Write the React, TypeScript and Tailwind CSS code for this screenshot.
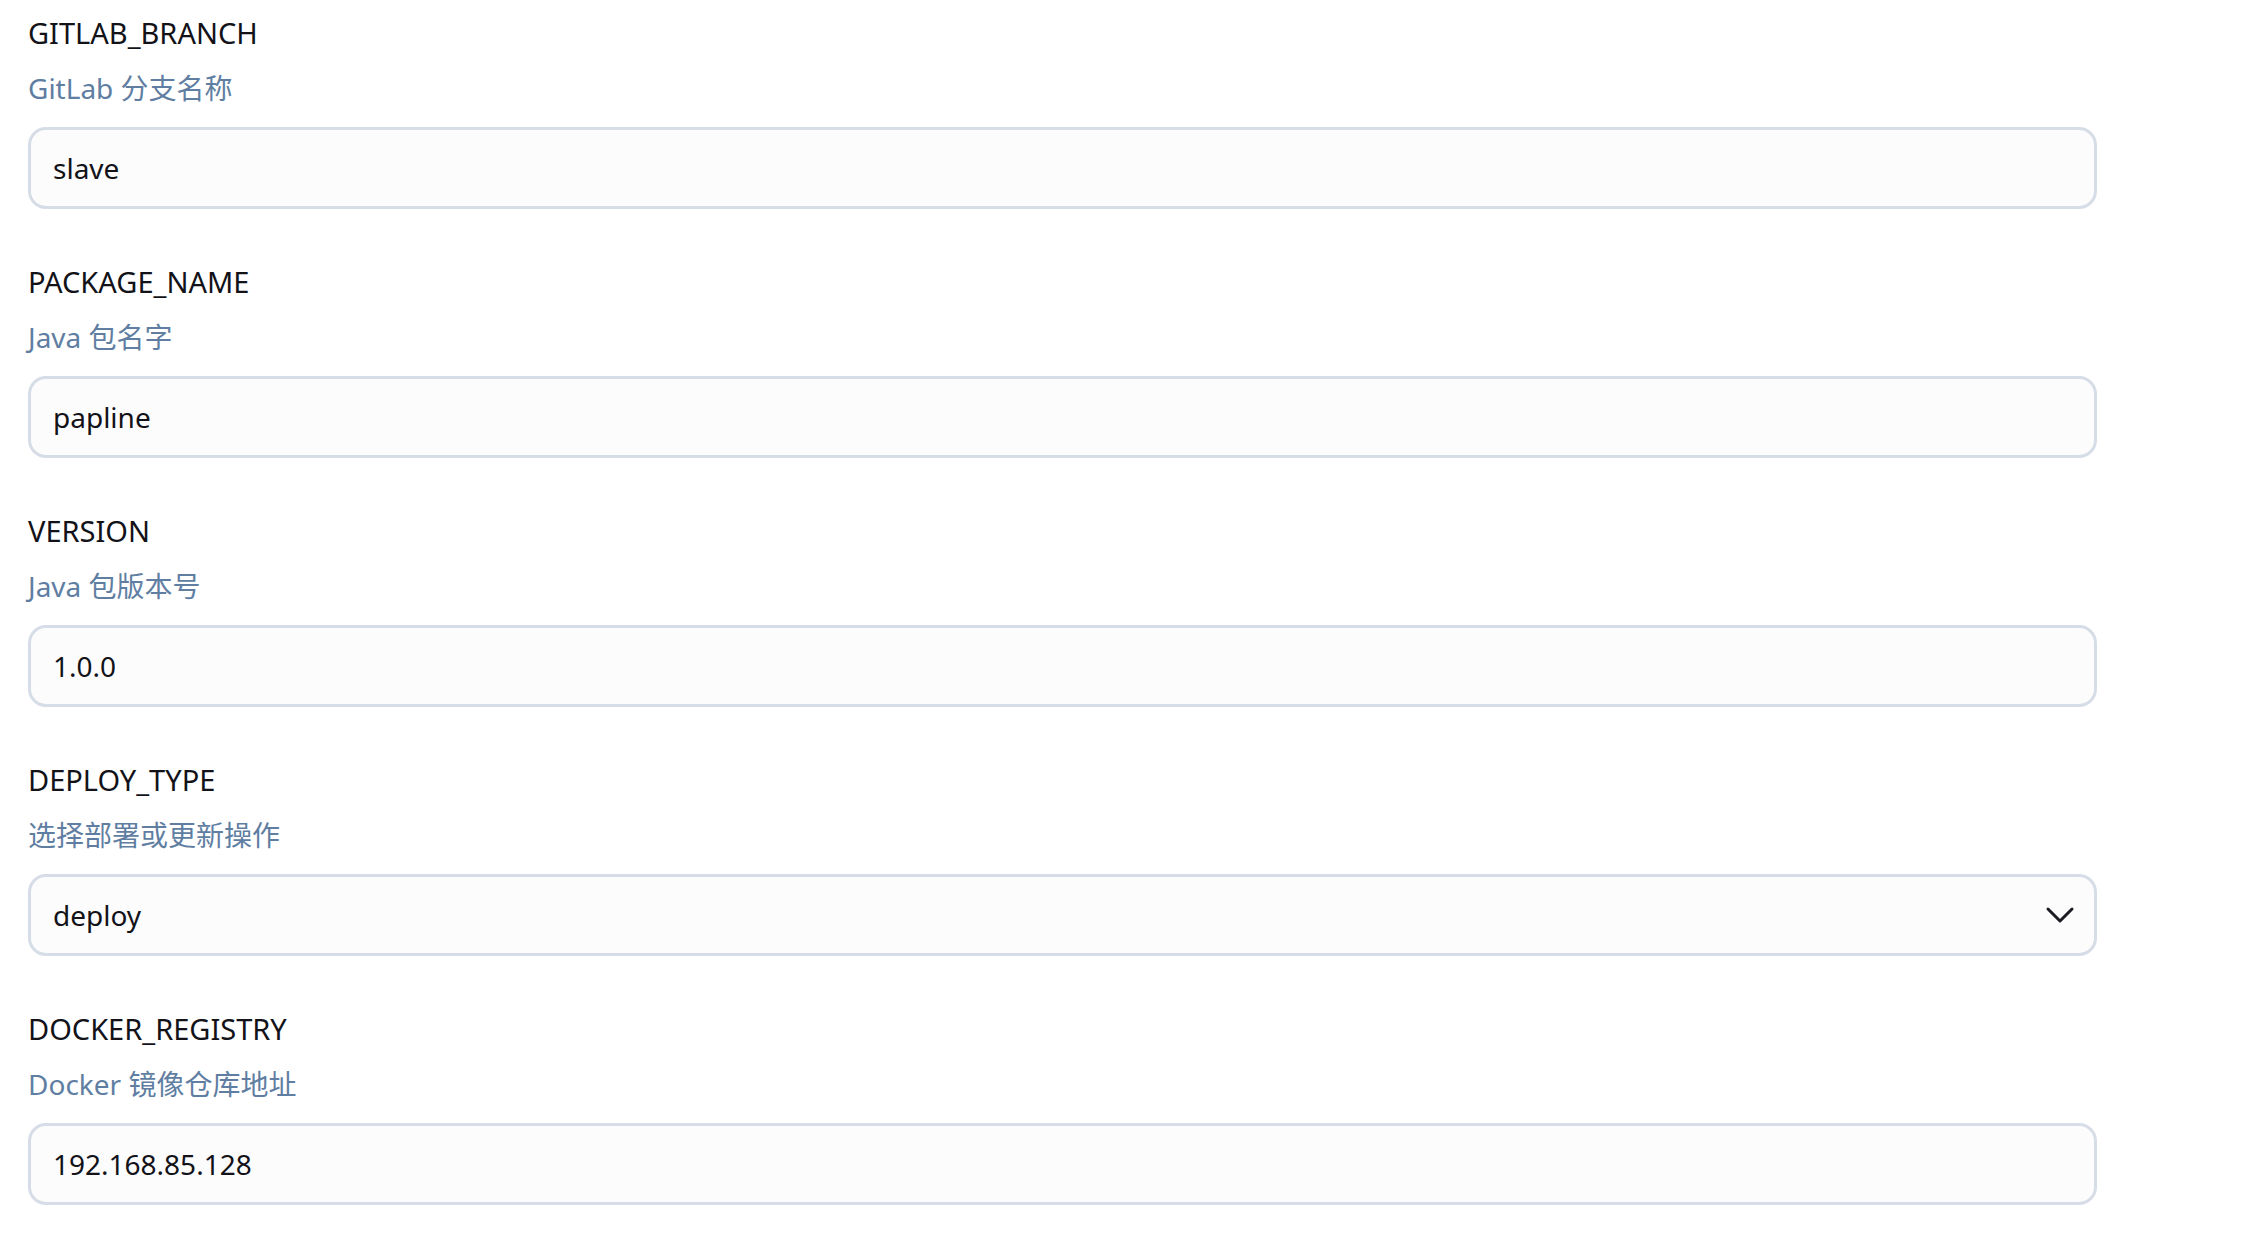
import { ChevronDown } from 'lucide-react';

type Field = {
  name: string;
  desc: string;
  value: string;
  options?: string[];
};

const fields: Field[] = [
  { name: 'GITLAB_BRANCH', desc: 'GitLab 分支名称', value: 'slave' },
  { name: 'PACKAGE_NAME', desc: 'Java 包名字', value: 'papline' },
  { name: 'VERSION', desc: 'Java 包版本号', value: '1.0.0' },
  { name: 'DEPLOY_TYPE', desc: '选择部署或更新操作', value: 'deploy', options: ['deploy', 'update'] },
  { name: 'DOCKER_REGISTRY', desc: 'Docker 镜像仓库地址', value: '192.168.85.128' },
];

const font = "font-['Noto_Sans','Noto_Sans_CJK_SC',sans-serif]";

function ParamField({ field }: { field: Field }) {
  return (
    <div className="flex flex-col pt-[13px] pb-[40px]">
      <div className="h-[40px] text-[29px] leading-[40px] text-[#121218] whitespace-nowrap">{field.name}</div>
      <div className="mt-[15px] h-[40px] text-[28px] leading-[40px] text-[#5f7ea2] whitespace-nowrap">
        {field.desc}
      </div>

      {/* Campo */}
      <div className="relative mt-[19px] w-[2069px]">
        {field.options ? (
          <>
            <select
              defaultValue={field.value}
              className={`${font} block h-[82px] w-full appearance-none rounded-[18px] border-[3px] border-[#d6dde7] bg-[#fcfcfd] pl-[22px] pr-[70px] text-[28px] text-[#121218] outline-none`}
            >
              {field.options.map((o) => (
                <option key={o} value={o}>{o}</option>
              ))}
            </select>
            <ChevronDown
              size={48}
              strokeWidth={1.5}
              className="pointer-events-none absolute right-[13px] top-1/2 -translate-y-1/2 text-[#1b1b22]"
            />
          </>
        ) : (
          <input
            type="text"
            defaultValue={field.value}
            className={`${font} block h-[82px] w-full rounded-[18px] border-[3px] border-[#d6dde7] bg-[#fcfcfd] px-[22px] text-[28px] text-[#121218] outline-none`}
          />
        )}
      </div>
    </div>
  );
}

export default function App() {
  return (
    <div className={`${font} min-h-screen bg-white px-[28px]`}>
      {fields.map((f) => (
        <ParamField key={f.name} field={f} />
      ))}
    </div>
  );
}
